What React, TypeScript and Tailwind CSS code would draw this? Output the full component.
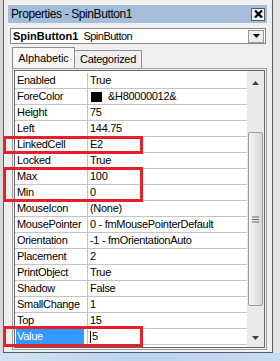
import React from 'react';

const rows: { name: string; value: string; swatch?: boolean; selected?: boolean }[] = [
  { name: 'Enabled', value: 'True' },
  { name: 'ForeColor', value: '&H80000012&', swatch: true },
  { name: 'Height', value: '75' },
  { name: 'Left', value: '144.75' },
  { name: 'LinkedCell', value: 'E2' },
  { name: 'Locked', value: 'True' },
  { name: 'Max', value: '100' },
  { name: 'Min', value: '0' },
  { name: 'MouseIcon', value: '(None)' },
  { name: 'MousePointer', value: '0 - fmMousePointerDefault' },
  { name: 'Orientation', value: '-1 - fmOrientationAuto' },
  { name: 'Placement', value: '2' },
  { name: 'PrintObject', value: 'True' },
  { name: 'Shadow', value: 'False' },
  { name: 'SmallChange', value: '1' },
  { name: 'Top', value: '15' },
  { name: 'Value', value: '5', selected: true },
];

function PropertyRow({ name, value, swatch, selected }: (typeof rows)[number]) {
  return (
    <div className="flex h-[16px] border-b border-[#c4c4c4] text-[11px] leading-[15px] tracking-[-0.3px] text-black">
      <div className="w-[73px] shrink-0 border-r border-[#c4c4c4] pl-[1px]">
        {selected ? (
          <span className="block w-[68px] bg-[#3399ff] pl-[1px] text-white">{name}</span>
        ) : (
          <span className="pl-[1px]">{name}</span>
        )}
      </div>
      <div className="flex flex-1 items-center pl-[2px] whitespace-nowrap overflow-hidden">
        {swatch && <span className="mr-[6px] ml-[1px] inline-block h-[10px] w-[11px] bg-black" />}
        {selected && <span className="mr-[1px] inline-block h-[12px] w-[1px] bg-black" />}
        <span>{value}</span>
      </div>
    </div>
  );
}

export default function App() {
  return (
    <div
      className="relative w-[280px] h-[361px] overflow-hidden bg-[#e9e9e9]"
      style={{ fontFamily: '"Liberation Sans", Arial, sans-serif' }}
    >
      <div className="flex h-[353px]">
        <div className="w-[3px] bg-[#d9d9d9]" />
        <div className="w-[270px] border-l border-r border-b border-[#5c5c5c] bg-[#f0f0f0]">
          {/* title bar */}
          <div className="mt-[5px] ml-[4px] flex h-[18px] w-[259px] items-center justify-between bg-[#a3bddb] pl-[3px] pr-[2px]">
            <span className="text-[12px] tracking-[-0.4px] text-black">Properties - SpinButton1</span>
            <div className="flex h-[13px] w-[14px] items-center justify-center border border-[#5d5d5d] bg-[#f2f2f2]">
              <svg width="9" height="8" viewBox="0 0 9 8">
                <path d="M1 0.5 L8 7.5 M8 0.5 L1 7.5" stroke="#000" strokeWidth="2.2" />
              </svg>
            </div>
          </div>

          {/* object dropdown */}
          <div className="mt-[5px] ml-[6px] flex h-[16px] w-[256px] items-center border border-[#8a8a8a] bg-white pl-[2px]">
            <span className="text-[11px] font-bold leading-none text-black">SpinButton1</span>
            <span className="ml-[5px] text-[11px] leading-none tracking-[-0.5px] text-black">SpinButton</span>
            <div className="ml-auto mr-[1px] flex h-[13px] w-[16px] items-center justify-center border border-[#9a9a9a] bg-[#ececec]">
              <svg width="7" height="4" viewBox="0 0 7 4">
                <path d="M0 0 H7 L3.5 4 Z" fill="#000" />
              </svg>
            </div>
          </div>

          {/* tabs */}
          <div className="mt-[4px] ml-[8px] flex h-[20px] items-end">
            <div className="flex h-[21px] w-[63px] items-center justify-center border border-b-0 border-[#8c8f96] bg-[#f7f7f7] text-[11px] tracking-[-0.1px] text-black">
              Alphabetic
            </div>
            <div className="flex h-[18px] w-[67px] items-center justify-center border border-l-0 border-b-0 border-[#8c8f96] bg-[#efefef] text-[11px] tracking-[-0.3px] text-black">
              Categorized
            </div>
          </div>

          {/* property grid */}
          <div className="ml-[8px] h-[282px] w-[255px] border border-[#a0a0a0] bg-[#f0f0f0] p-[1px]">
            <div className="flex h-full border border-[#6a6a6a] bg-white">
              <div className="flex-1 pt-[2px]">
                {rows.map((r) => (
                  <PropertyRow key={r.name} {...r} />
                ))}
              </div>
              {/* scrollbar */}
              <div className="flex w-[17px] flex-col bg-[#eaeaea]">
                <div className="flex h-[17px] items-center justify-center pt-[6px]">
                  <svg width="7" height="4" viewBox="0 0 7 4">
                    <path d="M0 4 H7 L3.5 0 Z" fill="#404040" />
                  </svg>
                </div>
                <div className="flex-1">
                  <div className="mx-[1px] mt-[44px] flex h-[174px] items-center justify-center rounded-[2px] border border-[#9c9c9c] bg-gradient-to-r from-[#f4f4f4] to-[#d6d6d6]">
                    <svg width="7" height="7" viewBox="0 0 7 7">
                      <path d="M0 1 H7 M0 3.5 H7 M0 6 H7" stroke="#6a6a6a" strokeWidth="1" />
                    </svg>
                  </div>
                </div>
                <div className="flex h-[17px] items-center justify-center pb-[2px]">
                  <svg width="7" height="4" viewBox="0 0 7 4">
                    <path d="M0 0 H7 L3.5 4 Z" fill="#404040" />
                  </svg>
                </div>
              </div>
            </div>
          </div>
        </div>
        <div className="flex-1 bg-[#e4e4e4]" />
      </div>
      <div className="h-[8px] bg-gradient-to-r from-[#d3e3f4] via-[#b9d2ee] to-[#c9dcf1]" />

      {/* red annotation boxes */}
      <div className="absolute left-[3px] top-[136px] h-[18px] w-[140px] border-[3px] border-[#e5202a]" />
      <div className="absolute left-[3px] top-[167px] h-[35px] w-[140px] border-[3px] border-[#e5202a]" />
      <div className="absolute left-[3px] top-[326px] h-[21px] w-[140px] border-[3px] border-[#e5202a]" />
    </div>
  );
}
